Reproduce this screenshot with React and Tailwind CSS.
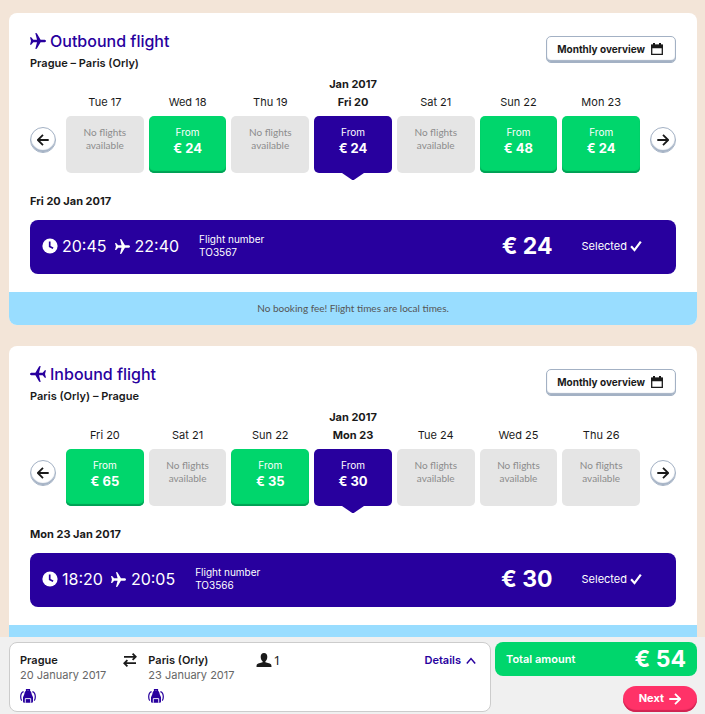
import React, { useState } from 'react';

const PlaneIcon = ({ className }) => (
  <svg className={className} viewBox="0 0 16 16" fill="currentColor" aria-hidden="true">
    <path d="M16 8c0-.8-.9-1.300-2-1.300h-3.400L6.800.3 5.300 0l1.700 6.700H3.300L1.200 4.200H0L1 8l-1 3.800h1.200l2.100-2.500H7L5.300 16l1.500-.3 3.800-6.400H14c1.100 0 2-.5 2-1.300z" />
  </svg>
);

const ClockIcon = ({ className }) => (
  <svg className={className} viewBox="0 0 16 16" aria-hidden="true">
    <circle cx="8" cy="8" r="7.6" fill="currentColor" />
    <path d="M7.7 3.6v4.8l3.4 1.8" fill="none" stroke="#28009e" strokeWidth="1.7" />
  </svg>
);

const CalendarIcon = ({ className }) => (
  <svg className={className} viewBox="0 0 12 12" aria-hidden="true">
    <path d="M.7 2.300h10.600v9H.7z" fill="none" stroke="currentColor" strokeWidth="1.300" />
    <path d="M.1 1.600h11.800v3.600H.1zM2 0h2v2.600H2zM8 0h2v2.600H8z" fill="currentColor" />
  </svg>
);

const ArrowIcon = ({ className }) => (
  <svg className={className} viewBox="0 0 12 12" fill="none" stroke="currentColor" strokeWidth="1.8" aria-hidden="true">
    <path d="M.3 6h10.800M6 .8L11.200 6 6 11.200" />
  </svg>
);

const CheckIcon = ({ className }) => (
  <svg className={className} viewBox="0 0 12 12" fill="none" stroke="currentColor" strokeWidth="2.2" aria-hidden="true">
    <path d="M1.1 6.2l3.4 3.9L10.8 1.6" />
  </svg>
);

const SwapIcon = ({ className }) => (
  <svg className={className} viewBox="0 0 14 14" fill="none" stroke="currentColor" strokeWidth="1.8" aria-hidden="true">
    <path d="M1 3.800h11.600M9.600.7l3.100 3.100-3.100 3.100M13 10.200H1.400M4.400 7.100l-3.100 3.100 3.100 3.100" />
  </svg>
);

const PersonIcon = ({ className }) => (
  <svg className={className} viewBox="0 0 16 14" fill="currentColor" aria-hidden="true">
    <path d="M8 0C5.900 0 4.700 1.500 4.700 3.700c0 1.900.7 3.700 1.900 4.600v1L2.300 10.600C.9 11 .5 12 .5 14h15c0-2-.4-3-1.800-3.400L9.400 9.300v-1c1.200-.9 1.900-2.700 1.900-4.600C11.300 1.500 10.100 0 8 0z" />
  </svg>
);

const BackpackIcon = ({ className }) => (
  <svg className={className} viewBox="0 0 16 14" aria-hidden="true">
    <path d="M3.600 2.600C1.500 3.300.7 5.600.7 7.800c0 1.600.3 2.900 1 3.900M12.400 2.600c2.100.7 2.900 3 2.900 5.200 0 1.600-.3 2.900-1 3.900" fill="none" stroke="currentColor" strokeWidth="1.200" />
    <path d="M6.500 1.900V.6h3v1.300" fill="none" stroke="currentColor" strokeWidth="1.200" />
    <path d="M8 1.300c-2.400 0-3.400 1.500-3.700 4L3 8.300v4c0 .9.400 1.500 1.200 1.500h7.600c.8 0 1.200-.6 1.200-1.500v-4l-1.300-3C11.400 2.800 10.400 1.300 8 1.300z" fill="currentColor" />
    <path d="M5.300 13.800V9.600h5.400v4.200" fill="none" stroke="#fff" strokeWidth=".9" />
  </svg>
);

const ChevronUpIcon = ({ className }) => (
  <svg className={className} viewBox="0 0 10 8" fill="none" stroke="currentColor" strokeWidth="1.500" aria-hidden="true">
    <path d="M.8 6.500L5 1.600l4.200 4.900" />
  </svg>
);

const flights = [
  {
    id: 'outbound',
    title: 'Outbound flight',
    route: 'Prague – Paris (Orly)',
    month: 'Jan 2017',
    selected: 'Fri 20',
    date: 'Fri 20 Jan 2017',
    departure: '20:45',
    arrival: '22:40',
    number: 'TO3567',
    price: 24,
    note: 'No booking fee! Flight times are local times.',
    days: [
      { label: 'Tue 17' },
      { label: 'Wed 18', price: 24 },
      { label: 'Thu 19' },
      { label: 'Fri 20', price: 24 },
      { label: 'Sat 21' },
      { label: 'Sun 22', price: 48 },
      { label: 'Mon 23', price: 24 },
    ],
  },
  {
    id: 'inbound',
    title: 'Inbound flight',
    route: 'Paris (Orly) – Prague',
    month: 'Jan 2017',
    selected: 'Mon 23',
    date: 'Mon 23 Jan 2017',
    departure: '18:20',
    arrival: '20:05',
    number: 'TO3566',
    price: 30,
    days: [
      { label: 'Fri 20', price: 65 },
      { label: 'Sat 21' },
      { label: 'Sun 22', price: 35 },
      { label: 'Mon 23', price: 30 },
      { label: 'Tue 24' },
      { label: 'Wed 25' },
      { label: 'Thu 26' },
    ],
  },
];

const RoundButton = ({ label, back }) => (
  <button
    aria-label={label}
    className="mb-5 flex h-[26px] w-[26px] shrink-0 items-center justify-center rounded-full border border-[#a3b1c4] bg-white shadow-[inset_0_-2px_1px_#a3b1c4]"
  >
    <ArrowIcon className={back ? 'h-3 w-3 rotate-180' : 'h-3 w-3'} />
  </button>
);

const DayCell = ({ day, month, active, onSelect }) => (
  <div className="flex flex-1 basis-0 flex-col text-center">
    {active && <span className="text-[11px] leading-[18px] font-bold">{month}</span>}
    <span className={active ? 'mb-[5px] text-[11px] leading-[18px] font-bold' : 'mb-[5px] text-[11px] leading-[18px]'}>
      {day.label}
    </span>
    {day.price ? (
      <button
        onClick={onSelect}
        className={
          active
            ? 'relative flex h-[57px] flex-col items-center rounded-[5px] bg-[#28009e] pt-[10px] text-white'
            : 'flex h-[57px] flex-col items-center rounded-[5px] bg-[#00d66c] pt-[10px] text-white shadow-[inset_0_-2px_1px_#00a055]'
        }
      >
        <span className="text-[10px] leading-[13px]">From</span>
        <span className="text-[13px] leading-[18px] font-bold">€ {day.price}</span>
        {active && (
          <svg className="absolute top-full left-1/2 h-[7px] w-[22px] -translate-x-1/2" viewBox="0 0 22 7" fill="#28009e">
            <path d="M0 0h22L12.500 6.500q-1.500 1-3 0z" />
          </svg>
        )}
      </button>
    ) : (
      <div className="h-[57px] rounded-[5px] bg-[#e5e5e5] pt-[10px] font-['Lato'] text-[10px] leading-[13px] text-[#8c8c8c]">
        No flights
        <br />
        available
      </div>
    )}
  </div>
);

const FlightCard = ({ flight }) => {
  const [selected, setSelected] = useState(flight.selected);

  return (
    <section className="overflow-hidden rounded-lg bg-white">
      <div className="px-[21px] pt-4 pb-[18px]">
        {/* Heading */}
        <div className="flex items-start justify-between">
          <div>
            <h2 className="flex items-center gap-1 text-[16px] leading-6 font-medium text-[#28009e]">
              <PlaneIcon className={flight.id === 'inbound' ? 'h-4 w-4 rotate-180' : 'h-4 w-4'} />
              {flight.title}
            </h2>
            <p className="text-[11px] leading-5 font-semibold">{flight.route}</p>
          </div>
          <button className="mt-[7px] flex h-[27px] items-center gap-[6px] rounded-[5px] border border-[#a3b1c4] bg-white pr-3 pb-[1px] pl-[10px] text-[10px] font-bold shadow-[inset_0_-2px_1px_#a3b1c4]">
            Monthly overview
            <CalendarIcon className="h-3 w-3" />
          </button>
        </div>

        {/* Week picker */}
        <div className="mt-[2px] flex items-end gap-[10px]">
          <RoundButton label="Previous week" back />
          <div className="flex flex-1 items-end gap-[5px]">
            {flight.days.map((day) => (
              <DayCell
                key={day.label}
                day={day}
                month={flight.month}
                active={day.label === selected}
                onSelect={() => setSelected(day.label)}
              />
            ))}
          </div>
          <RoundButton label="Next week" />
        </div>

        {/* Selected flight */}
        <p className="mt-[18px] text-[11px] leading-5 font-bold">{flight.date}</p>
        <div className="mt-[9px] flex h-[54px] items-center rounded-lg bg-[#28009e] pr-[34px] pb-[2px] pl-3 text-white">
          <ClockIcon className="mr-1 h-4 w-4" />
          <span className="text-[16px]">{flight.departure}</span>
          <PlaneIcon className="mr-[5px] ml-2 h-[15px] w-[15px]" />
          <span className="text-[16px]">{flight.arrival}</span>
          <p className="ml-5 text-[10px] leading-[13px]">
            Flight number
            <br />
            {flight.number}
          </p>
          <strong className="mr-[29px] ml-auto text-[23px] font-bold">€ {flight.price}</strong>
          <span className="flex items-center gap-[3px] text-[11px]">
            Selected
            <CheckIcon className="h-3 w-3" />
          </span>
        </div>
      </div>
      <p className="h-[33px] bg-[#99ddff] text-center font-['Lato'] text-[10px] leading-[33px] text-[#555]">
        {flight.note}
      </p>
    </section>
  );
};

const Stop = ({ city, date }) => (
  <div>
    <p className="text-[11px] leading-[15px] font-semibold">{city}</p>
    <p className="text-[11px] leading-[15px] text-[#666]">{date}</p>
    <BackpackIcon className="mt-[6px] h-[14px] w-4 text-[#28009e]" />
  </div>
);

const App = () => (
  <div className="flex h-screen flex-col bg-[#f3e5d8] font-['Inter',sans-serif] text-[#1a1a1a]">
    <main className="flex min-h-0 flex-1 flex-col gap-[21px] overflow-y-auto pt-[13px] pr-2 pl-[9px] [scrollbar-width:none] *:shrink-0">
      {flights.map((flight) => (
        <FlightCard key={flight.id} flight={flight} />
      ))}
    </main>

    {/* Booking summary */}
    <footer className="flex gap-1 bg-[#f0f0f0] pt-[5px] pr-2 pb-[2px] pl-[9px]">
      <div className="flex flex-1 items-start rounded-lg border border-[#ccc] bg-white px-[10px] pt-[10px] pb-2">
        <Stop city="Prague" date="20 January 2017" />
        <SwapIcon className="mr-[11px] ml-[17px] h-[14px] w-[14px]" />
        <Stop city="Paris (Orly)" date="23 January 2017" />
        <span className="ml-[21px] flex items-center gap-[2px] font-['Noto_Sans'] text-[13px] leading-[14px]">
          <PersonIcon className="h-[14px] w-4" />1
        </span>
        <button className="mr-1 ml-auto flex items-center gap-[5px] text-[11px] leading-[15px] font-semibold text-[#28009e]">
          Details
          <ChevronUpIcon className="h-2 w-[10px]" />
        </button>
      </div>
      <div className="flex w-[202px] flex-col items-end justify-between">
        <div className="flex h-[34px] w-full items-center justify-between rounded-lg bg-[#00d66c] px-[11px] text-white">
          <span className="text-[11px] font-semibold">Total amount</span>
          <strong className="text-[23px] font-bold">€ 54</strong>
        </div>
        <button className="flex h-[26px] items-center gap-[5px] rounded-full bg-[#ff3268] px-4 pb-[1px] text-[11px] font-bold text-white shadow-[inset_0_-2px_1px_#cf2452]">
          Next
          <ArrowIcon className="h-3 w-3" />
        </button>
      </div>
    </footer>
  </div>
);

export default App;
